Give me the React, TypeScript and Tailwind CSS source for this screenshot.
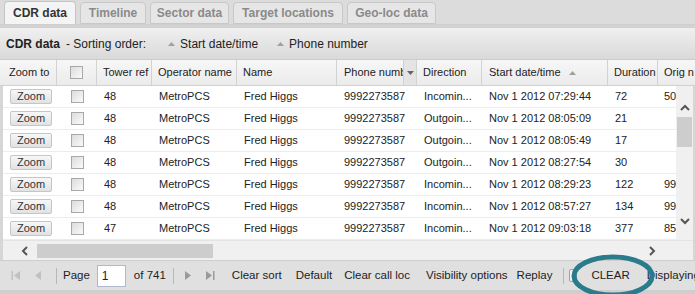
const cols = [
  { w: "w-[57px]", label: "Zoom to" },
  { w: "w-[40px]", label: "" },
  { w: "w-[55px]", label: "Tower ref" },
  { w: "w-[85px]", label: "Operator name" },
  { w: "w-[100px]", label: "Name" },
  { w: "w-[80px]", label: "Phone numb" },
  { w: "w-[65px]", label: "Direction" },
  { w: "w-[126px]", label: "Start date/time" },
  { w: "w-[50px]", label: "Duration" },
  { w: "w-[60px]", label: "Orig n" },
];

const rows = [
  ["48", "Incomin...", "07:29:44", "72", "50"],
  ["48", "Outgoin...", "08:05:09", "21", ""],
  ["48", "Outgoin...", "08:05:49", "17", ""],
  ["48", "Outgoin...", "08:27:54", "30", ""],
  ["48", "Incomin...", "08:29:23", "122", "99"],
  ["48", "Incomin...", "08:57:27", "134", "99"],
  ["47", "Incomin...", "09:03:18", "377", "85"],
];

const tabs = [
  { label: "CDR data", w: "w-[72px]" },
  { label: "Timeline", w: "w-[66px]" },
  { label: "Sector data", w: "w-[79px]" },
  { label: "Target locations", w: "w-[110px]" },
  { label: "Geo-loc data", w: "w-[89px]" },
];

const Up = () => (
  <svg width="7" height="4" viewBox="0 0 7 4" className="inline-block">
    <path d="M0 4 L3.5 0 L7 4 Z" fill="#a0a0a0" />
  </svg>
);

const Checkbox = () => (
  <div className="w-[13px] h-[13px] border border-[#a8a8a8] bg-gradient-to-br from-[#dcdcdc] to-[#fafafa]" />
);

const Chevron = ({ d }: { d: string }) => (
  <svg width="10" height="10" viewBox="0 0 10 10">
    <path d={d} fill="none" stroke="#555" strokeWidth="2" />
  </svg>
);

const PagerIcon = ({ kind, color }: { kind: string; color: string }) => (
  <svg width="10" height="11" viewBox="0 0 10 11">
    {kind === "first" && <><rect x="0.5" y="1" width="1.5" height="9" fill={color} /><path d="M9 1 L3 5.5 L9 10 Z" fill={color} /></>}
    {kind === "prev" && <path d="M8 1 L2 5.5 L8 10 Z" fill={color} />}
    {kind === "next" && <path d="M2 1 L8 5.5 L2 10 Z" fill={color} />}
    {kind === "last" && <><path d="M1 1 L7 5.5 L1 10 Z" fill={color} /><rect x="8" y="1" width="1.5" height="9" fill={color} /></>}
  </svg>
);

export default function App() {
  return (
    <div className="relative w-[695px] h-[294px] overflow-hidden bg-[#d6d6d6] font-['Liberation_Sans',Arial,sans-serif] text-[11px] text-[#222]">
      {/* tabs */}
      <div className="h-[25px] bg-[#dcdcdc] flex items-end gap-[4px] pl-[4px] border-b border-[#cfcfcf]">
        {tabs.map((t, i) => (
          <div
            key={t.label}
            className={
              i === 0
                ? `${t.w} h-[23px] flex items-center justify-center rounded-t-[4px] border border-b-0 border-[#c4c4c4] bg-[#f4f4f4] font-bold text-[#333] text-[12px]`
                : `${t.w} h-[22px] flex items-center justify-center rounded-t-[4px] border border-[#c8c8c8] bg-[#e6e6e6] font-bold text-[#8a8a8a] text-[12px]`
            }
          >
            {t.label}
          </div>
        ))}
      </div>
      <div className="h-[3px] bg-[#d3d3d3]" />

      {/* toolbar */}
      <div className="h-[32px] flex items-center bg-gradient-to-b from-[#f0f0f0] to-[#d9d9d9] border-b border-[#cccccc] pl-[6px] text-[12px]">
        <span className="font-bold">CDR data</span>
        <span className="ml-[6px]">- Sorting order:</span>
        <span className="ml-[22px] flex items-center gap-[5px]"><Up />Start date/time</span>
        <span className="ml-[19px] flex items-center gap-[5px]"><Up />Phone number</span>
      </div>

      {/* header */}
      <div className="h-[26px] flex bg-gradient-to-b from-[#f7f7f7] to-[#ebebeb] border-b border-[#d0d0d0] whitespace-nowrap">
        {cols.map((c, i) => (
          <div key={i} className={`${c.w} shrink-0 h-full flex items-center border-r border-[#d2d2d2] overflow-hidden`}>
            {i === 1 ? (
              <div className="w-full flex justify-center"><Checkbox /></div>
            ) : i === 5 ? (
              <div className="flex w-full h-full items-center">
                <span className="flex-1 pl-[7px] overflow-hidden">{c.label}</span>
                <span className="w-[13px] h-full flex items-center justify-center border-l border-[#d2d2d2] bg-[#e4e4e4]">
                  <svg width="7" height="4" viewBox="0 0 7 4"><path d="M0 0 L7 0 L3.5 4 Z" fill="#666" /></svg>
                </span>
              </div>
            ) : i === 7 ? (
              <span className="pl-[7px] flex items-center gap-[8px]">{c.label}<Up /></span>
            ) : (
              <span className={i === 0 ? "pl-[9px]" : "pl-[6px]"}>{c.label}</span>
            )}
          </div>
        ))}
      </div>

      {/* body */}
      <div className="h-[154px] flex pl-[3px]">
        <div className="flex-1 bg-white overflow-hidden whitespace-nowrap">
          {rows.map((r, i) => (
            <div key={i} className="h-[22px] flex items-center border-b border-[#ececec] -ml-[3px]">
              <div className="w-[57px] shrink-0 pl-[10px]">
                <div className="w-[42px] h-[15px] flex items-center justify-center border border-[#c6c6c6] rounded-[2px] bg-gradient-to-b from-[#f7f7f7] to-[#e2e2e2] text-[#333]">Zoom</div>
              </div>
              <div className="w-[40px] shrink-0 flex justify-center pl-[1px]"><Checkbox /></div>
              <div className="w-[55px] shrink-0 pl-[7px]">{r[0]}</div>
              <div className="w-[85px] shrink-0 pl-[7px]">MetroPCS</div>
              <div className="w-[100px] shrink-0 pl-[7px]">Fred Higgs</div>
              <div className="w-[80px] shrink-0 pl-[7px]">9992273587</div>
              <div className="w-[65px] shrink-0 pl-[7px]">{r[1]}</div>
              <div className="w-[126px] shrink-0 pl-[7px]">Nov 1 2012 {r[2]}</div>
              <div className="w-[50px] shrink-0 pl-[7px]">{r[3]}</div>
              <div className="w-[60px] shrink-0 pl-[6px]">{r[4]}</div>
            </div>
          ))}
        </div>
        <div className="w-[17px] bg-[#f0f0f0] flex flex-col items-center">
          <div className="mt-[17px]"><Chevron d="M1 7 L5 3 L9 7" /></div>
          <div className="mt-[4px] w-[15px] h-[30px] bg-[#cdcdcd]" />
          <div className="mt-auto mb-[14px]"><Chevron d="M1 3 L5 7 L9 3" /></div>
        </div>
        <div className="w-[2px] bg-[#d6d6d6]" />
      </div>

      {/* horizontal scrollbar */}
      <div className="h-[20px] flex items-center bg-[#f0f0f0] ml-[3px] mr-[2px] border-t border-[#e4e4e4]">
        <div className="ml-[17px]"><Chevron d="M7 1 L3 5 L7 9" /></div>
        <div className="ml-[7px] w-[176px] h-[14px] bg-[#cdcdcd]" />
        <div className="ml-auto mr-[36px]"><Chevron d="M3 1 L7 5 L3 9" /></div>
      </div>

      {/* pager */}
      <div className="h-[30px] flex items-center bg-[#e0e0e0] border-t border-[#cfcfcf] pl-[11px] whitespace-nowrap text-[11.5px] [&>*]:shrink-0">
        <PagerIcon kind="first" color="#c0c0c0" />
        <span className="ml-[12px]"><PagerIcon kind="prev" color="#c0c0c0" /></span>
        <span className="ml-[13px] w-px h-[16px] bg-[#b8b8b8]" />
        <span className="ml-[6px]">Page</span>
        <div className="ml-[7px] w-[29px] h-[22px] bg-white border border-[#b0b8d0] flex items-center pl-[4px] text-[12px]">1</div>
        <span className="ml-[8px]">of 741</span>
        <span className="ml-[7px] w-px h-[16px] bg-[#b8b8b8]" />
        <span className="ml-[9px]"><PagerIcon kind="next" color="#9a9a9a" /></span>
        <span className="ml-[12px]"><PagerIcon kind="last" color="#9a9a9a" /></span>
        <span className="ml-[17px]">Clear sort</span>
        <span className="ml-[14px]">Default</span>
        <span className="ml-[12px]">Clear call loc</span>
        <span className="ml-[16px]">Visibility options</span>
        <span className="ml-[9px]">Replay</span>
        <span className="ml-[11px] w-px h-[16px] bg-[#b8b8b8]" />
        <span className="ml-[5px] w-[8px] h-[13px] border border-[#a0a0a0] rounded-[2px] bg-[#f4f4f4]" />
        <span className="ml-[14px]">CLEAR</span>
        <span className="ml-[17px]">Displaying</span>
      </div>
      <div className="h-[4px] bg-[#cfcfcf]" />

      {/* annotation */}
      <svg className="absolute left-[571px] top-[253px]" width="84" height="48" viewBox="0 0 84 48">
        <ellipse cx="42" cy="23" rx="39" ry="19" fill="none" stroke="#2a7b8c" strokeWidth="5" />
      </svg>
    </div>
  );
}
